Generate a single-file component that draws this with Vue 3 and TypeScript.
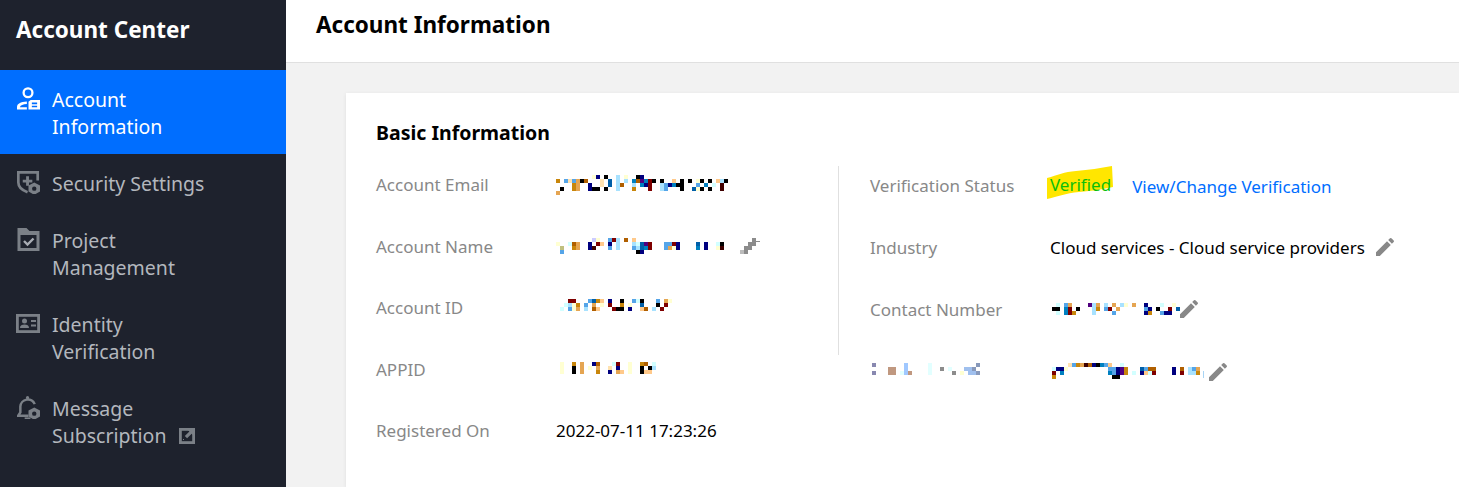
<script setup lang="ts">
const palette: Record<string, string> = {
  k: '#000000', n: '#00007f', r: '#7f0000', o: '#c8860b', t: '#e5a552', b: '#55a5e8',
  c: '#a8e2ff', y: '#ffffd2', p: '#ffc98a', d: '#005fa8', e: '#0080c0', w: '#b05f00',
  u: '#50007f', m: '#3f0000', z: '#d2ffff', a: '#ffe2b0', l: '#ccccff', h: '#c0c080',
  g: '#8c8c8c', f: '#bcbcbc', i: '#8888b0', j: '#c09880', q: '#a0c8ff', s: '#e2ffff',
  v: '#8899bb', x: '#a0c0ee',
}

function cells(rows: string[]) {
  const out: { key: string; x: number; y: number; fill: string }[] = []
  rows.forEach((row, y) => {
    row.split('').forEach((ch, x) => {
      if (palette[ch]) out.push({ key: `${x}-${y}`, x: x * 4, y: y * 4, fill: palette[ch] })
    })
  })
  return { cells: out, w: Math.max(...rows.map((r) => r.length)) * 4, h: rows.length * 4 }
}

const email = cells([
  '.........yn.k..c.y..kn',
  'o.babtkw...a.d.c.c.ewuerk.k..p.k.k.yk.k.pck',
  '....ot..n..a.d.cw..c.enr..cbnekk...b.e.z.m',
  '.k..ot..nkk.k..c...o...r..cb...k..dyk.k..m',
  't',
])
const nameMask = cells([
  '.........ly..brc.w.p',
  'y..zwt..n.rp.n.c...czdur...bbrn....d.n..zk',
  '.h..ot..nm...b.c...bcder...btyn....e.n..ym',
  '.b..................kn',
])
const pin = cells(['...g', '..gg', '.gg', 'fg'])
const accountId = cells([
  '..rr...bdop.n..k..bzk...b.ty',
  '.zcyo.b.t.y.r..o.y..d...k.r',
  'z.byt.c.wp...rkk.n..pw.c.r',
])
const appId = cells([
  'y..o.t..nw...zr..y..ow.z',
  'y..k.t.y.t..a.n..y..k.kc',
  'y..k.t...o..n.tp.y..kpp',
])
const contact = cells([
  '.z.bt....uct.c.t.cy.t..n...z..y',
  'kk.er.k...co.br.t......bn.k..r.d',
  '.z.ero....c....b.......no..bnn',
])
const otherLabel = cells([
  'i.......q.....s...........v',
  '....jj..q.....s..g.s...xxv',
  'i...jj.sqj....s.....g.y.xxv',
])
const otherValue = cells([
  '....abotmwnkebp..z',
  'znny..........bbnuo...dbww....n.w.cbt',
  'r.e...........ebnuo.z.npzr....n.r.cco',
  'o..............kk',
])

const pencil = 'M3 17.2V21h3.8L17.8 10 14 6.2 3 17.2ZM20.7 7a1 1 0 0 0 0-1.4l-2.3-2.3a1 1 0 0 0-1.4 0l-1.8 1.8 3.7 3.7L20.7 7Z'
</script>

<template>
  <div class="page">
    <aside class="sidebar">
      <div class="brand">Account Center</div>
      <nav class="nav">
        <a class="item active">
          <svg class="icon" viewBox="0 0 24 24" fill="none">
            <circle cx="11.5" cy="6" r="4.600" stroke="currentColor" stroke-width="2.400" />
            <path d="M0 23.500v-2.500c0-3.400 3.600-5.500 10.300-5.800v2.600c-4 .2-6.600 1.300-7.300 3.200h7.300v2.500H0Z" fill="currentColor" />
            <path fill-rule="evenodd" d="M12 15.500l2.200-2h9.800v10H12v-8ZM15.500 16.300v1.700h5.500v-1.700h-5.500Zm0 3.200v1.700h5.500v-1.700h-5.500Z" fill="currentColor" />
          </svg>
          <span>Account<br />Information</span>
        </a>
        <a class="item">
          <svg class="icon" viewBox="0 0 24 24" fill="none">
            <path d="M11 22.200C5 20 1.400 17 1.400 12V1.500h20.200V10" stroke="currentColor" stroke-width="2.800" />
            <path d="M9.500 5.500h3v3.500H16v3h-3.500v3.500h-3V12H6V9h3.500V5.500Z" fill="currentColor" />
            <path d="M18 12l6 3.200v6.300L18 24.800l-6-3.300v-6.300L18 12Z" fill="currentColor" />
            <circle cx="18" cy="18.400" r="2.300" fill="#1e222d" />
          </svg>
          <span>Security Settings</span>
        </a>
        <a class="item">
          <svg class="icon" viewBox="0 0 22 23">
            <path d="M0 0h9l3 3h10v20H0V0Z" fill="currentColor" />
            <path d="M3 7h16v13H3Z" fill="#1e222d" />
            <path d="M6.500 13l3.500 3.500 6-6" fill="none" stroke="#a9adb4" stroke-width="2.400" />
          </svg>
          <span>Project<br />Management</span>
        </a>
        <a class="item">
          <svg class="icon icon-card" viewBox="0 0 24 19">
            <path d="M0 0h24v19H0Z" fill="currentColor" />
            <path d="M2.800 2.800h18.400v13.400H2.800Z" fill="#1e222d" />
            <circle cx="8.500" cy="7" r="2.500" fill="currentColor" />
            <path d="M4 14c0-2.600 2-3.500 4.500-3.500S13 11.400 13 14H4ZM15 6h5v2h-5V6Zm0 4.500h5v2h-5v-2Z" fill="currentColor" />
          </svg>
          <span>Identity<br />Verification</span>
        </a>
        <a class="item">
          <svg class="icon" viewBox="0 0 24 24" fill="none">
            <path d="M18.500 8.500A7.800 7.800 0 0 0 3.500 11v6l-2.200 3.500H12" stroke="currentColor" stroke-width="2.600" />
            <path d="M8 23.200h6" stroke="currentColor" stroke-width="1.800" />
            <circle cx="11" cy="1.700" r="1.700" fill="currentColor" />
            <path d="M18 12l6 3.200v6.300L18 24.800l-6-3.300v-6.300L18 12Z" fill="currentColor" />
            <circle cx="18" cy="18.400" r="2.300" fill="#1e222d" />
          </svg>
          <span>Message<br />Subscription<svg class="ext" viewBox="0 0 16 16">
            <path d="M0 0h16v16H0Z" fill="currentColor" />
            <path d="M2.800 2.800h10.400v10.400H2.800Z" fill="#1e222d" />
            <path d="M8.500 1.500H15v6.500l-2.300-2.300-4.600 4.600-2.300-2.300 4.600-4.600-1.900-1.900Z" fill="currentColor" />
            <path d="M4 12l1-1" stroke="currentColor" />
          </svg></span>
        </a>
      </nav>
    </aside>

    <main class="main">
      <header class="topbar">Account Information</header>
      <section class="card">
        <h2 class="card-title">Basic Information</h2>
        <div class="columns">
          <div class="col-left">
            <div class="row">
              <span class="label">Account Email</span>
              <svg class="mosaic" :width="email.w" :height="email.h"><rect v-for="c in email.cells" :key="c.key" :x="c.x" :y="c.y" width="4" height="4" :fill="c.fill" /></svg>
            </div>
            <div class="row">
              <span class="label">Account Name</span>
              <svg class="mosaic" :width="nameMask.w" :height="nameMask.h"><rect v-for="c in nameMask.cells" :key="c.key" :x="c.x" :y="c.y" width="4" height="4" :fill="c.fill" /></svg>
              <svg class="mosaic pin" :width="pin.w + 4" :height="pin.h"><rect v-for="c in pin.cells" :key="c.key" :x="c.x" :y="c.y" width="4" height="4" :fill="c.fill" /><rect x="16" y="3" width="4" height="1" fill="#8c8c8c" /></svg>
            </div>
            <div class="row">
              <span class="label">Account ID</span>
              <svg class="mosaic shift-id" :width="accountId.w" :height="accountId.h"><rect v-for="c in accountId.cells" :key="c.key" :x="c.x" :y="c.y" width="4" height="4" :fill="c.fill" /></svg>
            </div>
            <div class="row">
              <span class="label">APPID</span>
              <svg class="mosaic shift-app" :width="appId.w" :height="appId.h"><rect v-for="c in appId.cells" :key="c.key" :x="c.x" :y="c.y" width="4" height="4" :fill="c.fill" /></svg>
            </div>
            <div class="row">
              <span class="label">Registered On</span>
              <span class="value">2022-07-11 17:23:26</span>
            </div>
          </div>

          <div class="col-right">
            <div class="bordered">
              <div class="right-rows">
                <div class="row row-r">
                  <span class="label">Verification Status</span>
                  <span class="verified">
                    <svg class="marker" width="68" height="36" viewBox="0 0 68 36">
                      <path d="M1 13C12 10 18 7 30 6c13-1 24-3 36-5l1 21c-10 2-20 4-34 5C20 28 10 32 1 34V13Z" fill="#ffe600" />
                    </svg>
                    <span class="verified-text">Verified</span>
                  </span>
                  <a class="link">View/Change Verification</a>
                </div>
                <div class="row row-r">
                  <span class="label">Industry</span>
                  <span class="value">Cloud services - Cloud service providers</span>
                  <svg class="pencil gap-industry" viewBox="0 0 24 24"><path :d="pencil" /></svg>
                </div>
                <div class="row row-r">
                  <span class="label">Contact Number</span>
                  <svg class="mosaic indent-2" :width="contact.w" :height="contact.h"><rect v-for="c in contact.cells" :key="c.key" :x="c.x" :y="c.y" width="4" height="4" :fill="c.fill" /></svg>
                  <svg class="pencil gap-contact" viewBox="0 0 24 24"><path :d="pencil" /></svg>
                </div>
              </div>
            </div>
            <div class="row row-r row-last">
              <span class="label">
                <svg class="mosaic other-label" :width="otherLabel.w" :height="otherLabel.h"><rect v-for="c in otherLabel.cells" :key="c.key" :x="c.x" :y="c.y" width="4" height="4" :fill="c.fill" /></svg>
              </span>
              <svg class="mosaic indent-2 other-value" :width="otherValue.w" :height="otherValue.h"><rect v-for="c in otherValue.cells" :key="c.key" :x="c.x" :y="c.y" width="4" height="4" :fill="c.fill" /></svg>
              <span class="caret"></span>
              <svg class="pencil gap-other" viewBox="0 0 24 24"><path :d="pencil" /></svg>
            </div>
          </div>
        </div>
      </section>
    </main>
  </div>
</template>

<style>
html, body { margin: 0; overflow: hidden; background: #f2f2f2; }
</style>

<style scoped>
.page {
  display: flex;
  width: 1459px;
  height: 487px;
  overflow: hidden;
  font-family: "Noto Sans", "Open Sans", sans-serif;
  font-size: 17px;
  color: #000;
}
.sidebar {
  flex: 0 0 286px;
  background: #1e222d;
}
.brand {
  height: 70px;
  box-sizing: border-box;
  padding: 15px 16px 0;
  font-size: 22.500px;
  line-height: 30px;
  font-weight: 700;
  color: #fff;
}
.item {
  display: flex;
  gap: 12px;
  padding: 16px 16px 14px 17px;
  line-height: 27px;
  font-size: 19.500px;
  color: #b3b7bd;
}
.item.active {
  background: #006eff;
  color: #fff;
}
.icon {
  flex: none;
  width: 23px;
  height: 23px;
  margin-top: 1px;
  color: #7b8087;
}
.active .icon { color: #fff; }
.icon-card {
  margin-left: -1px;
  width: 24px;
  height: 19px;
  margin-top: 3px;
}
.ext {
  display: inline-block;
  width: 16px;
  height: 16px;
  margin-left: 13px;
  vertical-align: -1px;
  color: #7b8087;
}
.main {
  flex: 1;
  min-width: 0;
  display: flex;
  flex-direction: column;
  background: #f2f2f2;
}
.topbar {
  height: 62px;
  border-bottom: 1px solid #e0e0e0;
  background: #fff;
  padding-left: 30px;
  font-size: 22.500px;
  font-weight: 700;
  line-height: 50px;
}
.card {
  flex: 1;
  margin: 30px 0 0 60px;
  padding: 24px 0 0 30px;
  background: #fff;
  box-shadow: 0 1px 4px rgba(0, 0, 0, 0.08);
}
.card-title {
  margin: 0;
  font-size: 19.500px;
  line-height: 32px;
  font-weight: 700;
}
.columns {
  display: flex;
  margin-top: 17px;
}
.col-left {
  flex: 0 0 462px;
  margin-top: -12px;
}
.col-right { flex: 1; }
.bordered {
  display: flow-root;
  border-left: 1px solid #e0e0e0;
  padding-left: 31px;
  height: 189px;
}
.right-rows { margin-top: -12px; }
.row {
  display: flex;
  align-items: center;
  height: 61.500px;
}
.row-r { height: 62px; }
.row-last {
  padding-left: 32px;
  margin-top: -14px;
}
.label {
  flex: 0 0 180px;
  color: #888;
  display: flex;
  align-items: center;
}
.value { color: #000; }
.mosaic { display: block; flex: none; }
.shift-id { margin: -6px 0 0 4px; }
.shift-app { margin: -2px 0 0 4px; }
.indent-2 { margin-left: 2px; }
.other-label { margin: -6px 0 0 2px; }
.other-value { margin-top: -2px; }
.pin { margin-left: 16px; }
.verified {
  position: relative;
  display: inline-block;
  margin-right: 21px;
}
.marker {
  position: absolute;
  left: -4px;
  top: -9px;
}
.verified-text {
  position: relative;
  top: -1px;
  color: #0abf0a;
}
.link {
  color: #006eff;
  position: relative;
  top: 1px;
}
.pencil {
  flex: none;
  width: 24px;
  height: 24px;
  fill: #888;
}
.gap-industry { margin-left: 8px; }
.gap-contact { margin-left: -3px; }
.gap-other { margin-left: 2px; }
.caret {
  flex: none;
  width: 1px;
  height: 7px;
  margin: 4px 0 0 3px;
  background: #a8d4f5;
}
</style>
